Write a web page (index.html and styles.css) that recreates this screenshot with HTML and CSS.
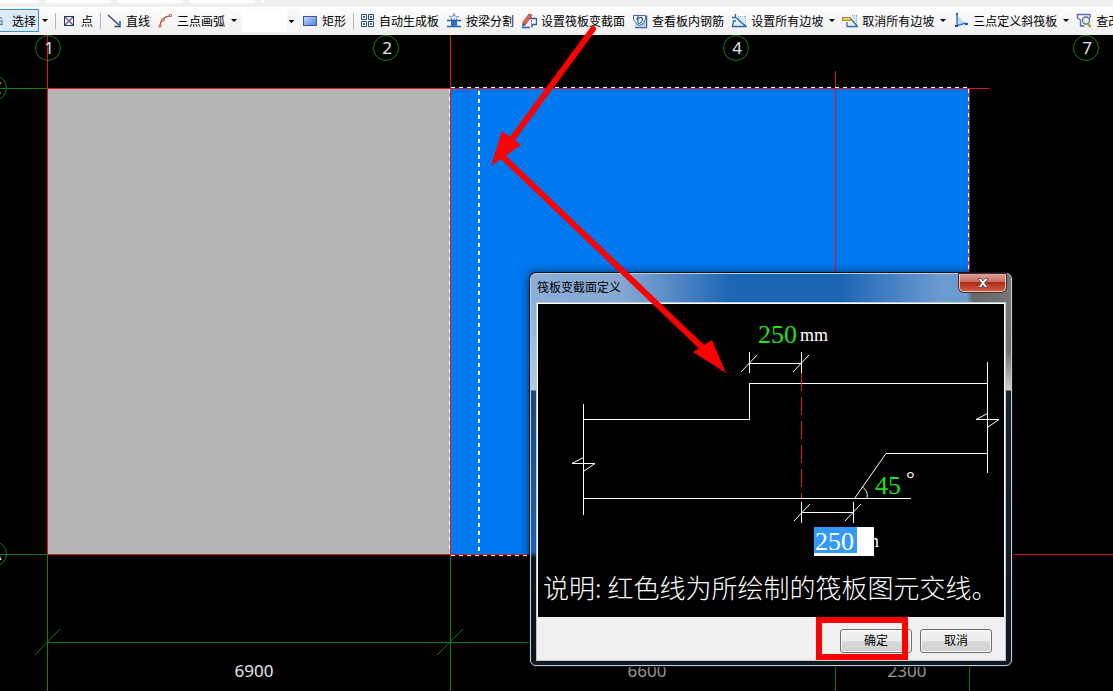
FILE: index.html
```html
<!DOCTYPE html>
<html lang="zh-CN">
<head>
<meta charset="utf-8">
<title>筏板变截面定义</title>
<link rel="stylesheet" href="styles.css">
</head>
<body>
<header class="chrome">
  <div class="tabs-edge"></div>
  <nav class="toolbar" aria-label="绘图工具">
    <button class="select-tool" type="button">
      <svg class="cursor" viewBox="0 0 4 16"><path d="M0 4l2 2M0 8h3M0 11l2 1v-3" stroke="#3c5f96" fill="none"/></svg>选择</button>
    <button class="caret" type="button" aria-label="选择选项"></button>
    <span class="sep"></span>
    <button class="tool" type="button"><svg class="icon" viewBox="0 0 16 16"><rect x="3.500" y="3.500" width="9" height="9" fill="#fff" stroke="#27325c"/><path d="M4 4l8 8M12 4l-8 8" stroke="#4a4fa8" stroke-width="1.200"/><path d="M7 8h2" stroke="#d04030" stroke-width="2"/></svg>点</button>
    <span class="sep"></span>
    <button class="tool" type="button"><svg class="icon" viewBox="0 0 16 16"><path d="M2 2l11 10" stroke="#2c4770" stroke-width="1.400"/><path d="M14 8v5.500H8.500" fill="none" stroke="#2c4770" stroke-width="1.400"/></svg>直线</button>
    <button class="tool" type="button"><svg class="icon" viewBox="0 0 16 16"><path d="M3 14C3 9 5 4 14 2.500" fill="none" stroke="#a05a50" stroke-width="1.300"/><path d="M2 12h2v2h-2zM5 6h2v2h-2zM12.500 1.500h2v2h-2z" fill="#fff" stroke="#d8603c"/></svg>三点画弧</button>
    <button class="caret" type="button" aria-label="画弧选项"></button>
    <select class="combo" aria-label="参数"><option></option></select>
    <button class="tool" type="button"><svg class="icon" viewBox="0 0 16 16"><defs><linearGradient id="rg" x2="1" y2="1"><stop stop-color="#c9dcff"/><stop offset="1" stop-color="#4c7ede"/></linearGradient></defs><rect x="1.500" y="3.500" width="13" height="9" fill="url(#rg)" stroke="#3a5a9c"/></svg>矩形</button>
    <span class="sep"></span>
    <button class="tool" type="button"><svg class="icon" viewBox="0 0 16 16"><path d="M2.500 1.500h5v5h-5zM9.500 1.500h5v5h-5zM2.500 8.500h5v5h-5zM9.500 8.500h5v5h-5z" fill="#fff" stroke="#27477c"/><path d="M4 4h2M11 4h2M4 11h2M11 11h2" stroke="#3b6ab0" stroke-width="2"/></svg>自动生成板</button>
    <button class="tool" type="button"><svg class="icon" viewBox="0 0 16 16"><path d="M5 7l1-4 2-1 2 1 1 4z" fill="#d8e6f8" stroke="#5a84bc" stroke-dasharray="2 1"/><path d="M8 0v3M3 3l2 1M13 3l-2 1" stroke="#4a70a8"/><path d="M1 7.500h14M1 13.500h14" stroke="#2a5ca8" stroke-width="1.400"/><rect x="5" y="8" width="6" height="5" fill="#2f6cc4"/></svg>按梁分割</button>
    <button class="tool" type="button"><svg class="icon" viewBox="0 0 16 16"><path d="M6 5.500h9.500v6H11v3M1 14.500h8" fill="none" stroke="#2b5aa8" stroke-width="1.300"/><path d="M10.500 4v10" stroke="#c03ad0" stroke-dasharray="2 1"/><path d="M2 9L8 1l3 1-6 9-3 1z" fill="#df6a50" stroke="#a84030" stroke-width=".8"/><path d="M1 14l1-4 3 2z" fill="#2b5aa8"/></svg>设置筏板变截面</button>
    <button class="tool" type="button"><svg class="icon" viewBox="0 0 16 16"><path d="M3 14.500h11.500V2.500" fill="none" stroke="#456b9f" stroke-width="1.500"/><rect x="3" y="3" width="11" height="11" fill="#b4d0ee"/><path d="M1.500 2.500h12v3l-2 5-4 2-3-2-3-4z" fill="#f3f8ff" stroke="#47658f"/><path d="M6 3v7M9 4c3 2 1 6-3 7M4 6l6-2" fill="none" stroke="#315d8d" stroke-width="1.200"/></svg>查看板内钢筋</button>
    <button class="tool" type="button"><svg class="icon" viewBox="0 0 16 16"><path d="M5 4h9v9H8z" fill="#dcebfc"/><path d="M14.500 3v10M7 3.500h8M8 7l5 5" stroke="#79a9df" stroke-dasharray="1 1"/><path d="M4.500 1v3.500H1M4.500 4.500l3 2M5 8H2.500L1.500 13.500H15L7 6.500" fill="none" stroke="#2764b0" stroke-width="1.300"/></svg>设置所有边坡</button>
    <button class="caret" type="button" aria-label="设置边坡选项"></button>
    <button class="tool" type="button"><svg class="icon" viewBox="0 0 16 16"><path d="M9 3h6v10z" fill="#dcebfc"/><path d="M10 2.500h5M14.500 3v10M11 4l3 3" stroke="#6fa6df" stroke-dasharray="1 1"/><path d="M5 9v4.500h10.500L9 6" fill="none" stroke="#2e6db7" stroke-width="1.300"/><rect x=".5" y="4.500" width="8" height="3" fill="#f5cf4f" stroke="#a58a37"/></svg>取消所有边坡</button>
    <button class="caret" type="button" aria-label="取消边坡选项"></button>
    <button class="tool" type="button"><svg class="icon" viewBox="0 0 16 16"><path d="M4 2v10l8-2z" fill="#bfdbf5"/><path d="M4 1v12M3 13l10-3" stroke="#3f79b7" stroke-width="1.500"/><path d="M3 1h2M12 11h3M2 13h3" stroke="#20559b" stroke-width="2"/></svg>三点定义斜筏板</button>
    <button class="caret" type="button" aria-label="斜筏板选项"></button>
    <button class="tool" type="button"><svg class="icon" viewBox="0 0 16 16"><path d="M1 1.500h13M1.500 1v4l3 2v6h4M14 1v4" fill="none" stroke="#5270ad" stroke-width="1.400"/><circle cx="10" cy="7.500" r="3.500" fill="#e3f0fb" stroke="#5b6f91" stroke-width="1.300"/><path d="M12 11l2.500 3" stroke="#d3912e" stroke-width="2.500"/></svg>查改</button>
  </nav>
</header>

<main class="workspace">
  <svg class="plan" aria-label="平面图">
    <g transform="translate(0 -35)">
      <rect x="48" y="89" width="402" height="465" fill="#b4b4b4"/>
      <rect x="451" y="89" width="518" height="465" fill="#0078f0"/>
      <g class="axis">
        <path class="crisp" d="M0 88.500H47M0 554.500H47M47.500 555V691M450.500 555V691M835.500 555V691M969.500 555V691M47 642.500H969"/>
        <path d="M35 655l25-26M437 655l26-26"/>
        <circle cx="48" cy="48" r="12.500"/><circle cx="386" cy="48" r="12.500"/><circle cx="736" cy="48" r="12.500"/><circle cx="1086" cy="48" r="12.500"/>
        <circle cx="-6" cy="88" r="12.500"/><circle cx="-6" cy="554" r="12.500"/>
      </g>
      <path class="edge crisp" d="M47.500 35V554M450.500 35V554M47 88.500H989M47 554.500H1113M835.500 71V554M969.500 89V554"/>
      <path class="marquee crisp" d="M451 87.500H969M449.500 89V554M968.500 89V554M451 555.500H969"/>
      <path class="marquee strong crisp" d="M479 91V554"/>
      <g class="labels">
        <text x="49" y="54">1</text><text x="387" y="54">2</text><text x="737" y="54">4</text><text x="1087" y="54">7</text>
        <text x="-4" y="94">C</text><text x="-4" y="560">A</text>
        <text x="254" y="677">6900</text><text class="dim" x="647" y="677">6600</text><text class="dim" x="907" y="677">2300</text>
      </g>
    </g>
  </svg>

  <section class="dialog" role="dialog" aria-labelledby="dlg-title">
    <div class="titlebar">
      <h1 class="title" id="dlg-title">筏板变截面定义</h1>
      <button class="close" type="button" aria-label="关闭"><svg viewBox="0 0 12 10"><path d="M1 .5h3l2 2.500 2-2.500h3L7.500 5 11 9.500H8L6 7 4 9.500H1L4.500 5z" fill="#fff" stroke="#5b4a55" stroke-width=".8"/></svg></button>
    </div>
    <div class="client">
      <div class="canvas">
        <svg class="section" aria-label="变截面示意图">
          <g transform="translate(-538 -304)">
            <path class="line crisp" d="M749.500 352V373M801.500 352V373M749 363.500H801M583.500 419.500H749.500V383.500H987.500M583.500 404V515M987.500 362V473M583 498.500H911M801 512.500H854M801.500 502V523M853.500 502V523M886 453.500H987"/>
            <path class="line" d="M741 372l16-17M793 372l16-17M794 521l16-17M845 521l16-17M854.500 498.500L886 453.500M583.500 457.500L572 463.500H595L584 471M987.500 413.500L976 419.500H999L988 427M862 487C866 489 868 493 867 498"/>
            <path class="joint crisp" d="M801.500 373V498"/>
            <text class="value" x="758" y="343">250</text><text class="unit" x="800" y="341">mm</text>
            <text class="value" x="875" y="494">45</text><text class="degree" x="906" y="486">°</text>
            <text class="unit" x="851" y="547">mm</text>
          </g>
        </svg>
        <input class="width-input" type="text" value="250" aria-label="底部宽度">
        <p class="note"><span>说明:</span><span>红色线为所绘制的筏板图元交线。</span></p>
      </div>
      <div class="actions">
        <button class="btn" type="button">确定</button>
        <button class="btn" type="button">取消</button>
      </div>
    </div>
  </section>
</main>

<svg class="annotations" aria-hidden="true">
  <path d="M593 29L507 146M503 157L705 350" fill="none" stroke="#f00" stroke-width="6" stroke-linecap="round"/>
  <path d="M491 166L502 131L521 145zM726 373L693 352L712 340z" fill="#f00"/>
  <rect x="819" y="620" width="86" height="37" fill="none" stroke="#f00" stroke-width="6"/>
</svg>
</body>
</html>
```
FILE: styles.css
```css
* { box-sizing: border-box; }

body {
  margin: 0;
  min-height: 100vh;
  display: flex;
  flex-direction: column;
  position: relative;
  overflow: hidden;
  background: #000;
  font: 12px/16px "Noto Sans CJK SC", sans-serif;
  color: #000;
}

button, input, select { font: inherit; color: inherit; }

.chrome { background: #f0f0f0; }

.tabs-edge {
  height: 7px;
  background: repeating-linear-gradient(90deg, #fff 0 38px, #f0f0f0 40px 44px, #fff 46px 72px) 0 0 / 264px 3px no-repeat;
}

.toolbar {
  display: flex;
  align-items: center;
  height: 28px;
  padding-bottom: 1px;
  overflow: hidden;
  background: linear-gradient(#fdfdfd, #f0f0f0);
}

.toolbar button { flex: none; border: 0; background: none; white-space: nowrap; }

.toolbar .select-tool {
  display: flex;
  align-items: center;
  gap: 8px;
  width: 39px;
  height: 23px;
  padding: 0;
  border: 1px solid #3c8fdc;
  border-left: 0;
  background: #dcebfa;
}

.cursor { width: 4px; height: 16px; }

.tool {
  display: flex;
  align-items: center;
  gap: 4px;
  height: 23px;
  padding: 0 3px 0 4px;
}

.icon { width: 16px; height: 16px; flex: none; }

.toolbar .caret { width: 12px; height: 23px; padding: 0; display: grid; place-items: center; }

.caret::before {
  content: "";
  border: 3px solid transparent;
  border-top-color: #000;
  border-bottom: 0;
}

.sep { flex: none; width: 6px; height: 16px; padding-left: 4px; }
.sep::before { content: ""; display: block; width: 1px; height: 16px; background: #b8b8b8; }

.combo {
  flex: none;
  width: 56px;
  height: 22px;
  margin-left: 2px;
  border: 0;
  appearance: none;
  background:
    linear-gradient(#000, #000) 47px 10px / 5px 1px no-repeat,
    linear-gradient(#000, #000) 48px 11px / 3px 1px no-repeat,
    linear-gradient(#000, #000) 49px 12px / 1px 1px no-repeat,
    linear-gradient(90deg, #fff 45px, #f7f7f7 45px);
}

.workspace { position: relative; flex: 1; }

.plan { position: absolute; inset: 0; width: 100%; height: 100%; }

.crisp { shape-rendering: crispEdges; }
.axis { fill: none; stroke: #128012; stroke-width: 1; }
.edge { fill: none; stroke: #e0141c; stroke-width: 1; }
.marquee { fill: none; stroke: #fff; stroke-width: 1; stroke-dasharray: 4 4; }
.marquee.strong { stroke-width: 2; }
.labels { font: 17px "Noto Sans", sans-serif; fill: #e6e6e6; text-anchor: middle; }
.labels .dim { fill: #a0a0a0; }

.dialog {
  position: absolute;
  left: 530px;
  top: 238px;
  width: 482px;
  padding: 0 5px 4px;
  border: 1px solid #c3ccd4;
  border-radius: 6px;
  box-shadow: 0 0 0 1px #10151c, 0 0 8px 1px rgba(0, 0, 0, 0.6);
  background:
    linear-gradient(90deg, #8aaeda 0, #86a9d3 90px, #1c66b4 200px, #1c66b4 310px, #6c9bd0 410px, #6c9bd0 436px, #666 442px, #777 100%) 0 0 / 100% 28px no-repeat,
    linear-gradient(#8aaeda, #b4cbe6 88px, #1d4876 89px, #1c62b0 250px, #10151a 256px) 0 28px / 6px 100% no-repeat,
    linear-gradient(#777, #707070 50px, #d0d0d0 88px, #1c252c 89px, #10151a) 100% 28px / 6px 100% no-repeat,
    #161b20;
}

.titlebar { display: flex; justify-content: space-between; height: 28px; }

.title { margin: 5px 0 0 1px; font-size: 12px; line-height: 16px; font-weight: 400; }

.close {
  display: grid;
  place-items: center;
  width: 47px;
  height: 18px;
  padding: 0;
  border: 1px solid #eec3bb;
  border-top: 0;
  border-radius: 0 0 5px 5px;
  box-shadow: 0 0 0 1px #4c2a2e;
  background: linear-gradient(#dca097, #cb6f60 45%, #b02c18 50%, #cf5a42);
}
.close svg { width: 12px; height: 10px; }

.client { border: 1px solid #b9c8d6; background: #f0f0f0; }

.canvas {
  position: relative;
  border: 1px solid #fff;
  border-bottom: 0;
  background: #000;
}

.section { display: block; width: 100%; height: 260px; }
.line { fill: none; stroke: #fff; }
.joint { fill: none; stroke: #e01c24; stroke-dasharray: 18 6; }
.value { font: 26px "Liberation Serif", serif; fill: #1fe01f; }
.unit { font: 18px "Liberation Serif", serif; fill: #fff; }
.degree { font: 22px "Liberation Serif", serif; fill: #fff; }

.width-input {
  position: absolute;
  left: 276px;
  top: 223px;
  width: 60px;
  height: 29px;
  padding: 0 0 0 1px;
  border: 0;
  border-radius: 0;
  outline: 0;
  font: 26px/29px "Liberation Serif", serif;
  color: #fff;
  background: linear-gradient(#3399ff, #3399ff) 0 0 / 43px 26px no-repeat #fff;
}

.note {
  display: flex;
  gap: 6px;
  margin: 0;
  padding: 0 0 7px 5px;
  font-size: 26px;
  line-height: 46px;
  font-weight: 300;
  color: #fff;
  white-space: nowrap;
}

.actions {
  display: flex;
  justify-content: flex-end;
  gap: 8px;
  padding: 12px 13px 7px;
}

.btn {
  width: 72px;
  height: 24px;
  padding: 0 0 2px;
  border: 1px solid #707070;
  border-radius: 3px;
  box-shadow: inset 0 0 0 1px #fafafa;
  background: linear-gradient(#f3f3f3, #ebebeb 50%, #dadada 50%, #cfcfcf);
}

.annotations {
  position: absolute;
  inset: 0;
  width: 100%;
  height: 100%;
  pointer-events: none;
}
```
